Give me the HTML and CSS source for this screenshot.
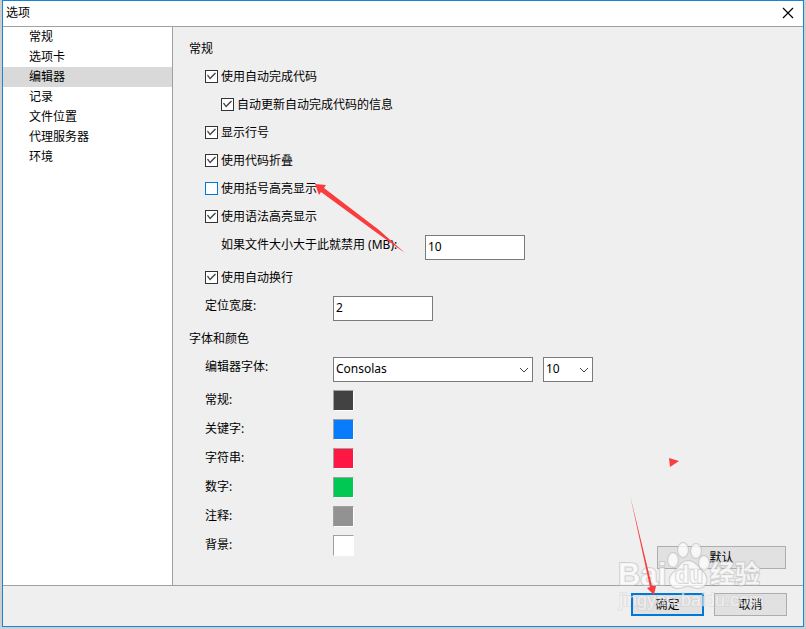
FILE: index.html
```html
<!DOCTYPE html>
<html lang="zh-CN">
<head>
<meta charset="utf-8">
<title>选项</title>
<link rel="stylesheet" href="styles.css">
</head>
<body>
<div class="window">
  <header class="titlebar">
    <h1 class="title">选项</h1>
    <button class="close" type="button" aria-label="关闭">
      <svg width="12" height="12" viewBox="0 0 12 12"><path d="M1 1L11 11M11 1L1 11" stroke="#000" stroke-width="1.2" fill="none"/></svg>
    </button>
  </header>

  <div class="main">
    <nav class="sidebar">
      <a class="nav-item" href="#general">常规</a>
      <a class="nav-item" href="#tabs">选项卡</a>
      <a class="nav-item selected" href="#editor" aria-current="page">编辑器</a>
      <a class="nav-item" href="#record">记录</a>
      <a class="nav-item" href="#files">文件位置</a>
      <a class="nav-item" href="#proxy">代理服务器</a>
      <a class="nav-item" href="#env">环境</a>
    </nav>

    <div class="content">
      <form class="form" id="editor">
        <h2 class="heading">常规</h2>
        <label class="check"><input type="checkbox" checked><span>使用自动完成代码</span></label>
        <label class="check nested"><input type="checkbox" checked><span>自动更新自动完成代码的信息</span></label>
        <label class="check"><input type="checkbox" checked><span>显示行号</span></label>
        <label class="check"><input type="checkbox" checked><span>使用代码折叠</span></label>
        <label class="check"><input class="active" type="checkbox"><span>使用括号高亮显示</span></label>
        <label class="check"><input type="checkbox" checked><span>使用语法高亮显示</span></label>
        <div class="field nested"><label class="label wide" for="limit">如果文件大小大于此就禁用 (MB):</label><input class="text" id="limit" type="text" value="10"></div>
        <label class="check"><input type="checkbox" checked><span>使用自动换行</span></label>
        <div class="field"><label class="label" for="tab">定位宽度:</label><input class="text" id="tab" type="text" value="2"></div>

        <h2 class="heading">字体和颜色</h2>
        <div class="field">
          <label class="label" for="font">编辑器字体:</label>
          <span class="combo font"><select id="font"><option>Consolas</option></select><svg width="10" height="6" viewBox="0 0 10 6"><path d="M1 1L5 5L9 1" stroke="#444" fill="none"/></svg></span>
          <span class="combo size"><select aria-label="字号"><option>10</option></select><svg width="10" height="6" viewBox="0 0 10 6"><path d="M1 1L5 5L9 1" stroke="#444" fill="none"/></svg></span>
        </div>
        <div class="color"><label class="label" for="c1">常规:</label><button class="swatch normal" id="c1" type="button"></button></div>
        <div class="color"><label class="label" for="c2">关键字:</label><button class="swatch keyword" id="c2" type="button"></button></div>
        <div class="color"><label class="label" for="c3">字符串:</label><button class="swatch string" id="c3" type="button"></button></div>
        <div class="color"><label class="label" for="c4">数字:</label><button class="swatch number" id="c4" type="button"></button></div>
        <div class="color"><label class="label" for="c5">注释:</label><button class="swatch comment" id="c5" type="button"></button></div>
        <div class="color"><label class="label" for="c6">背景:</label><button class="swatch background" id="c6" type="button"></button></div>
      </form>
      <button class="button reset" type="button">默认</button>
    </div>
  </div>

  <footer class="footer">
    <button class="button primary" type="button">确定</button>
    <button class="button" type="button">取消</button>
  </footer>
</div>

<svg class="overlay" width="806" height="629" viewBox="0 0 806 629">
  <g class="mark">
    <ellipse cx="673" cy="560" rx="5" ry="7"/>
    <ellipse cx="683" cy="550" rx="5" ry="7"/>
    <ellipse cx="696" cy="551" rx="5" ry="7"/>
    <ellipse cx="704" cy="563" rx="5" ry="7"/>
    <path d="M688 561c-7 0-9 7-14 11c-8 7-4 16 4 16c4 0 6-2 10-2s6 2 10 2c9 0 11-10 5-16c-5-5-8-11-15-11z"/>
    <text class="latin" x="618" y="585">Bai</text>
    <text class="latin du" x="675" y="583">du</text>
    <text class="cjk" x="710" y="583">经验</text>
    <text class="url" x="619" y="606">jingyan.baidu.com</text>
  </g>
  <g class="arrows">
    <path d="M315 184L326 185L324 188L379 230L405 253L377 233L321 192L319 195Z"/>
    <path d="M669 458L679 461L670 467Z"/>
    <path d="M630 495L652 586L656 586L654 595L647 588L650 587Z"/>
  </g>
</svg>
</body>
</html>
```
FILE: styles.css
```css
* {
  box-sizing: border-box;
}

body {
  margin: 0;
  min-height: 100vh;
  padding: 0 2px 2px;
  display: flex;
  background: #cfcfcf;
  color: #000;
  font: 12px/20px "Noto Sans", "Noto Sans CJK SC", sans-serif;
}

button,
input,
select {
  margin: 0;
  font: inherit;
  color: inherit;
}

.window {
  flex: 1;
  display: flex;
  flex-direction: column;
  border: 1px solid #1883d7;
  background: #efefef;
}

.titlebar {
  display: flex;
  align-items: center;
  justify-content: space-between;
  height: 26px;
  padding: 0 9px 2px 3px;
  background: #fff;
  border-bottom: 1px solid #a0a0a0;
}

.title,
.heading {
  margin: 0;
  font-size: 12px;
  font-weight: 400;
}

.close {
  display: flex;
  padding: 0;
  border: 0;
  background: none;
}

.main {
  flex: 1;
  display: flex;
}

.sidebar {
  width: 170px;
  background: #fff;
  border-right: 1px solid #a0a0a0;
}

.nav-item {
  display: block;
  padding-left: 26px;
  color: inherit;
  text-decoration: none;
}

.nav-item.selected {
  background: #d9d9d9;
}

.content {
  flex: 1;
  display: flex;
  padding: 7px 17px 16px 16px;
}

.form {
  flex: 1;
}

.heading,
.check,
.label {
  height: 28px;
  line-height: 30px;
}

.check {
  display: flex;
  align-items: center;
  gap: 3px;
  margin-left: 16px;
}

.check span {
  height: 28px;
}

.check.nested,
.field.nested {
  margin-left: 32px;
}

.check input {
  appearance: none;
  width: 13px;
  height: 13px;
  border: 1px solid #333;
  background: #fff;
  display: grid;
  place-items: center;
}

.check input:checked::after {
  content: "";
  width: 11px;
  height: 11px;
  background: #444;
  clip-path: polygon(1px 5px, 2px 4px, 4px 7px, 9px 2px, 10px 3px, 4px 9px);
}

.check input.active {
  border-color: #0078d7;
}

.field,
.color {
  display: flex;
  align-items: flex-start;
  margin-left: 16px;
}

.field {
  height: 33px;
}

.color {
  height: 29px;
}

.label {
  width: 128px;
}

.label.wide {
  width: 204px;
}

.text,
.combo {
  height: 25px;
  margin-top: 5px;
}

.text,
.combo select {
  border: 1px solid #7a7a7a;
  border-radius: 0;
  background: #fff;
  padding: 0 2px 2px;
}

.text {
  width: 100px;
}

.combo {
  position: relative;
}

.combo select {
  appearance: none;
  display: block;
  width: 100%;
  height: 100%;
}

.combo svg {
  position: absolute;
  right: 4px;
  top: 10px;
  pointer-events: none;
}

.combo.font {
  width: 200px;
  margin-right: 10px;
}

.combo.size {
  width: 50px;
}

.swatch {
  width: 21px;
  height: 21px;
  margin-top: 5px;
  padding: 0;
  border: 1px solid;
  border-color: #a0a0a0 #fff #fff #a0a0a0;
}

.normal { background: #424242; }
.keyword { background: #087cfa; }
.string { background: #ff1744; }
.number { background: #00c853; }
.comment { background: #929292; }
.background { background: #fff; }

.button {
  width: 73px;
  height: 23px;
  padding: 0;
  border: 1px solid #adadad;
  background: #e1e1e1;
  line-height: 20px;
}

.button.reset {
  width: 129px;
  align-self: flex-end;
}

.button.primary {
  border: 2px solid #0078d7;
  line-height: 18px;
}

.footer {
  display: flex;
  justify-content: flex-end;
  gap: 10px;
  padding: 7px 16px 10px;
  border-top: 1px solid #a0a0a0;
}

.overlay {
  position: absolute;
  top: 0;
  left: 0;
  pointer-events: none;
}

.arrows {
  fill: #fa3c3c;
}

.mark {
  fill: #fff;
  fill-opacity: 0.75;
  stroke: #bbb;
  stroke-opacity: 0.6;
  stroke-width: 2px;
  paint-order: stroke;
}

.latin {
  font: 700 31px "Liberation Sans", sans-serif;
}

.du {
  font-size: 23px;
}

.cjk {
  font: 700 25px "Noto Sans CJK SC", sans-serif;
}

.url {
  font: 18px "Liberation Sans", sans-serif;
  fill-opacity: 0.6;
  stroke-opacity: 0.25;
}
```
